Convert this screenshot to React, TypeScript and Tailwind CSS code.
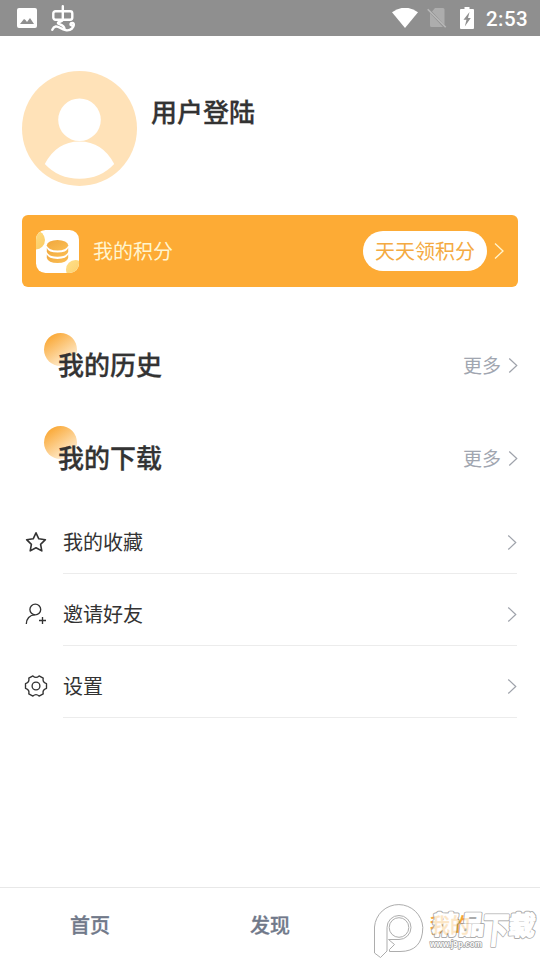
import type { ReactNode } from "react";

const FONT = "font-['Noto_Sans_CJK_SC',sans-serif]";

function Chevron({ className }: { className: string }) {
  return (
    <svg viewBox="0 0 10 16" className={`shrink-0 ${className}`} fill="none" stroke="currentColor" strokeWidth="1.300">
      <path d="M1 .5l8 7.500-8 7.500" />
    </svg>
  );
}

function StatusBar() {
  return (
    <header className="flex h-9 items-center bg-[#8f8f8f] text-white">
      <svg viewBox="0 0 20 20" className="ml-[17px] h-5 w-5">
        <path
          fill="currentColor"
          fillRule="evenodd"
          d="M2 0h16a2 2 0 0 1 2 2v16a2 2 0 0 1-2 2H2a2 2 0 0 1-2-2V2a2 2 0 0 1 2-2zM3 16h14l-4-6-3 4-1.500-2-1.500-1z"
        />
      </svg>
      <svg viewBox="0 0 26 28" className="ml-[13px] h-7 w-[26px]" fill="none" stroke="currentColor" strokeWidth="2.400" strokeLinecap="round" strokeLinejoin="round">
        <rect x="3.300" y="7.200" width="19" height="8.600" rx="2.200" />
        <path d="M12.800 2.200V15.800C12 18 7.500 17.600 8 19.300C9 20.800 14 20.500 14.500 24.800" />
        <path d="M2.300 25.800C4 21.800 7 21.800 10 23.800C14 26.500 19 27.300 22 24.500C24.300 22 24.500 19.300 22.300 19C20 19 20 21 21.400 21.400" />
      </svg>
      <div className="ml-auto flex items-center">
        <svg viewBox="0 0 26 20" className="h-5 w-[26px]">
          <path fill="currentColor" d="M0 4.200Q13-4.800 26 4.200L13 20z" />
        </svg>
        <svg viewBox="0 0 20 20" className="ml-[9px] h-5 w-5">
          <path fill="#adadad" d="M8 0h8q1.500 0 1.500 1.500v15.500L5 3.500zM3 5v12.500Q3 19 4.500 19h11.500z" />
          <path d="M.7 1.200l18 18" stroke="#b8b8b8" strokeWidth="1.600" />
        </svg>
        <svg viewBox="0 0 14 22" className="ml-[13px] h-[22px] w-3.5">
          <path fill="currentColor" fillRule="evenodd" d="M4.500 0h5v2H13q1 0 1 1v18q0 1-1 1H1q-1 0-1-1V3q0-1 1-1h3.500zM9.500 5L3.500 12.800h3l-1.700 6.700L10.800 11H8z" />
        </svg>
        <span className="mt-0.5 mr-3 ml-3 font-[Roboto,sans-serif] text-[20.500px] leading-5 font-medium tracking-[0.4px]">
          2:53
        </span>
      </div>
    </header>
  );
}

function Avatar() {
  return (
    <svg viewBox="0 0 116 116" className="h-[116px] w-[116px]">
      <circle cx="58.500" cy="58.500" r="57.500" fill="#ffe2b8" />
      <circle cx="58.500" cy="49.800" r="21.300" fill="#fff" />
      <path d="M23.800 94Q35.500 71.500 58.500 71.500T93.200 94Q79.500 108.800 58.500 108.800T23.800 94z" fill="#fff" />
    </svg>
  );
}

function CoinIcon() {
  return (
    <svg viewBox="0 0 43 43" className="h-[43px] w-[43px]">
      <defs>
        <clipPath id="tile">
          <rect width="43" height="43" rx="9.500" />
        </clipPath>
        <linearGradient id="coin" x1="0" y1="0" x2="1" y2="1">
          <stop stopColor="#f0a63c" />
          <stop offset="1" stopColor="#fbbf55" />
        </linearGradient>
        <linearGradient id="blob" x1="0" y1="0" x2="1" y2="1">
          <stop stopColor="#ffe08a" />
          <stop offset="1" stopColor="#fbcb62" />
        </linearGradient>
      </defs>
      <g clipPath="url(#tile)">
        <rect width="43" height="43" fill="#fff" />
        <circle cx="-.5" cy="10" r="9.500" fill="url(#blob)" />
        <circle cx="39.500" cy="39.500" r="9.500" fill="url(#blob)" />
        <g fill="url(#coin)">
          <ellipse cx="21.500" cy="15.200" rx="10.700" ry="5.300" />
          <path d="M10.800 18q1.500 4.600 10.700 4.600t10.700-4.600v3.900q-1.500 4.900-10.700 4.900t-10.700-4.900z" />
          <path d="M10.800 24.300q1.500 4.600 10.700 4.600t10.700-4.600v3.700q-1.500 5-10.700 5t-10.700-5z" />
        </g>
      </g>
    </svg>
  );
}

function SectionTitle({ children }: { children: ReactNode }) {
  return (
    <section className="flex h-[93px] items-center justify-between pr-[22px] pl-[58px]">
      <div className="relative mb-0.5">
        <span className="absolute -top-3 -left-[14px] h-[33px] w-[33px] rounded-full bg-linear-[145deg] from-[#faab3c] from-15% to-[#fff3df] to-90%" />
        <h2 className="relative text-[26px] leading-[38px] font-medium text-[#333] [-webkit-text-stroke:0.3px_#333]">{children}</h2>
      </div>
      <div className="flex items-center pt-px text-[#a1a6b0]">
        <span className="mr-[7px] text-[19px] leading-7">更多</span>
        <Chevron className="h-[15px] w-2.5 text-[#9fa3ab]" />
      </div>
    </section>
  );
}

const starIcon = (
  <path d="M12 2.800l2.800 6 6.600.9-4.800 4.600 1.200 6.600L12 17.700l-5.800 3.200 1.200-6.600L2.600 9.700l6.600-.9z" strokeWidth="1.600" />
);

const inviteIcon = (
  <>
    <circle cx="11.300" cy="7.500" r="5.400" />
    <path d="M2.300 22c0-5.200 3.400-9.200 8.600-9.200M18.500 15v7M15 18.500h7" />
  </>
);

const gearIcon = (
  <>
    <circle cx="12" cy="12" r="3.900" />
    <path d="M8.900 1.900Q12 4.800 15.100 1.900L19.200 4.200Q18.200 8.400 22.500 9.700V14.300Q18.200 15.600 19.200 19.800L15.100 22.100Q12 19.200 8.900 22.100L4.800 19.800Q5.800 15.600 1.500 14.300V9.700Q5.800 8.400 4.800 4.200z" />
  </>
);

const menu = [
  { label: "我的收藏", icon: starIcon },
  { label: "邀请好友", icon: inviteIcon },
  { label: "设置", icon: gearIcon },
];

function WatermarkName() {
  return (
    <>
      <text x="528" y="934" fontSize="25.500" textLength="52">
        精品
      </text>
      <text x="578" y="943" fontSize="36" textLength="26" lengthAdjust="spacingAndGlyphs">
        下
      </text>
      <text x="604" y="935" fontSize="26.500">
        载
      </text>
    </>
  );
}

function Watermark() {
  return (
    <svg viewBox="370 898 170 62" className="absolute right-0 bottom-0 h-[62px] w-[170px]" fill="none" stroke="#adadad" strokeWidth="1" strokeLinejoin="round">
      <path
        fill="#fff"
        fillOpacity=".7"
        d="M374.500 953V927A24.200 24.200 0 0 1 422.800 927.500Q422.500 951.500 400 951.500H389.500V949.500L394.500 944.500L388.500 939.500H399A12 12 0 1 0 387 927.500V951L380.500 957.500z"
      />
      <circle cx="399" cy="927.500" r="9.800" />
      <g opacity=".72" className="font-['Noto_Sans_CJK_SC',sans-serif] font-bold" transform="translate(2 0) skewX(-6)">
        <g stroke="#8c8c8c" strokeWidth="3.400">
          <WatermarkName />
        </g>
        <g stroke="#fff" strokeWidth="1.600" fill="#fff">
          <WatermarkName />
        </g>
      </g>
      <text x="430" y="946.500" fontSize="9.500" textLength="52" lengthAdjust="spacingAndGlyphs" fill="#fff" stroke="#a0a0a0" strokeWidth="1.600" paintOrder="stroke" className="font-['Liberation_Sans',sans-serif] font-bold">
        www.j9p.com
      </text>
    </svg>
  );
}

export default function App() {
  return (
    <div className={`relative flex h-[960px] w-[540px] flex-col overflow-hidden bg-white ${FONT}`}>
      <StatusBar />

      <section className="flex h-[179px] items-start px-[21px] pt-[34px]">
        <Avatar />
        <h1 className="mt-[22px] ml-3.5 text-[26px] leading-[38px] font-medium text-[#333] [-webkit-text-stroke:0.3px_#333]">用户登陆</h1>
      </section>

      <section className="mx-[22px] flex h-[72px] shrink-0 items-center rounded-md bg-[#fdab35] px-3.5">
        <CoinIcon />
        <span className="ml-3.5 text-[20px] text-[#fff5cf]">我的积分</span>
        <span className="mr-[7px] ml-auto flex h-10 items-center rounded-full bg-white px-3 text-[20px] text-[#f4aa42]">
          天天领积分
        </span>
        <Chevron className="h-4 w-2.5 text-[#fff5cf]" />
      </section>

      <div className="mt-[31px]">
        <SectionTitle>我的历史</SectionTitle>
        <SectionTitle>我的下载</SectionTitle>
      </div>

      <ul className="-mt-0.5">
        {menu.map((item) => (
          <li key={item.label} className="flex h-[72px] pr-[23px] pl-6">
            <svg viewBox="0 0 24 24" className="mt-7 h-6 w-6 shrink-0" fill="none" stroke="#333" strokeWidth="1.350" strokeLinejoin="round">
              {item.icon}
            </svg>
            <div className="ml-[15px] flex flex-1 items-center justify-between border-b border-[#ececec] pt-[9px]">
              <span className="text-[20px] text-[#333]">{item.label}</span>
              <Chevron className="h-[15px] w-2.5 text-[#9fa3ab]" />
            </div>
          </li>
        ))}
      </ul>

      <nav className="mt-auto grid h-[73px] grid-cols-3 items-center border-t border-[#e8e8e8] pt-0.5 text-center text-[20px] font-medium text-[#71798a] [-webkit-text-stroke:0.3px_currentColor]">
        <span>首页</span>
        <span>发现</span>
        <span className="text-[#f5a52f]">我的</span>
      </nav>
      <Watermark />
    </div>
  );
}
